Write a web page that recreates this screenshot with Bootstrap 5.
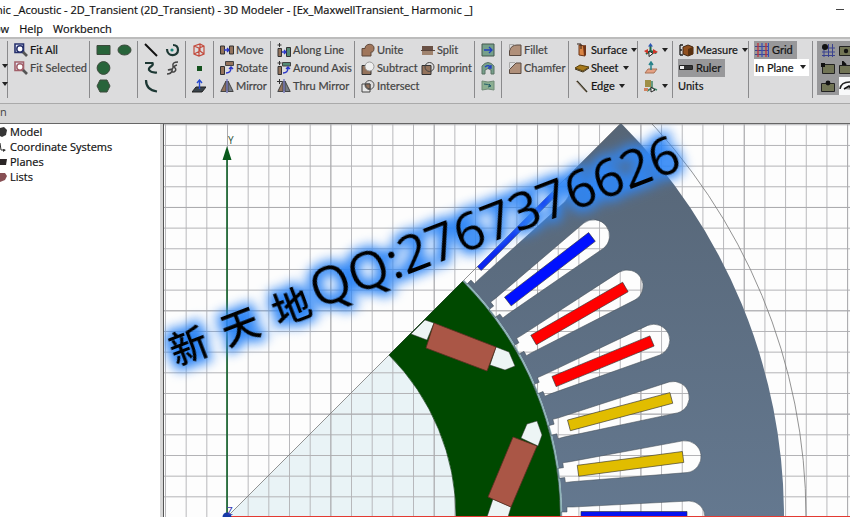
<!DOCTYPE html>
<html lang="en">
<head>
<meta charset="utf-8">
<meta name="viewport" content="width=device-width, initial-scale=1">
<title>3D Modeler</title>
<link href="https://cdn.jsdelivr.net/npm/bootstrap@5.3.0/dist/css/bootstrap.min.css" rel="stylesheet">
<style>
body{font-family:"Open Sans","Noto Sans",sans-serif;font-size:11px;line-height:18px;color:#111;background:#fff}
.app{min-height:100vh}
.titlebar{height:20px;font-size:11px;line-height:20px;margin-left:-4px;-webkit-text-stroke:.2px #111}
.menubar{height:17px;line-height:17px;gap:10px;margin-left:-6px;-webkit-text-stroke:.2px #111}
.menubar a{color:#111}
.ribbon{background:#dcdcdd;border-top:2px solid #bcbcbc;border-bottom:1px solid #aaa;height:67px;padding-top:2px}
.grp{padding:0 0 0 6px;display:flex;flex:none;height:57px;border-right:1px solid #8a8a8c}
.stack{display:flex;flex-direction:column;flex:none}
.tool{display:flex;align-items:center;gap:2px;height:18px;padding:0;border:0;background:none;color:#444;white-space:nowrap;font-family:Lato,"Open Sans",sans-serif;font-size:11px;line-height:18px;-webkit-text-stroke:.2px currentColor}
.dark .tool,.tool.ink{color:#151515}
.tool svg{flex:none}
.tri::after{content:"";border:3px solid transparent;border-top:4px solid #222;border-bottom:0;margin-left:2px}
.tool.on{background:#98989a}
.w-a{width:8px;padding:0}.w-b{width:82px}.w-c{width:48px}.w-d{width:28px}.w-e{width:57px}.w-f{width:84px}.w-g{width:120px}.w-h{width:27px}.w-i{width:67px}.w-j{width:69px}.w-k{width:35px}.w-l{width:76px;padding-left:5px}.w-m{width:64px;padding-left:5px}
.w-g .stack:first-child{width:60px}
.w-c .stack{width:21px}
.w-n{padding-left:4px;border:0}
.plane{width:55px;height:17px;border:0;background:#fff;color:#111;font-family:Lato,"Open Sans",sans-serif;font-size:11px;line-height:17px;padding:0 1px;appearance:none;-webkit-text-stroke:.2px #111}
.pick{position:relative;width:55px;height:17px}
.pick::after{content:"";position:absolute;right:3px;top:6px;border:3px solid transparent;border-top:4px solid #222;border-bottom:0;pointer-events:none}
.tabs{height:20px;background:#d6d6d6;line-height:16px;color:#444;border-bottom:1px solid #666}
.tree{width:160px;flex:none;line-height:15px;-webkit-text-stroke:.2px #111}
.tree li{display:flex;align-items:center;gap:2px;height:15px}
.split{width:4px;flex:none;background:#d6d6d6;border-right:1px solid #555}
.view{min-width:0}
.view svg{display:block;width:100%}
.mark-text{font-family:"Open Sans","Noto Sans CJK SC",sans-serif;font-size:52px;fill:#000}
.mark-cjk{font-family:"Noto Sans CJK SC",sans-serif;font-size:38px;font-weight:500}
.axis-text{font-family:"Open Sans",sans-serif;font-size:10px}
</style>
<script src="https://cdn.jsdelivr.net/npm/bootstrap@5.3.0/dist/js/bootstrap.bundle.min.js"></script>
</head>
<body>
<svg width="0" height="0" class="position-absolute" aria-hidden="true">
<defs>
<symbol id="fit" viewBox="0 0 14 14"><path d="M1 1h8.500v8.500H1z" fill="#e8eefc" stroke="currentColor" stroke-width="1.600"/><circle cx="6" cy="6" r="3.200" fill="#fff" stroke="currentColor" stroke-width="1.500"/><path d="M9 9l4 4" stroke="#555" stroke-width="2.600"/></symbol>
<symbol id="move" viewBox="0 0 14 14"><path d="M.5 3h4v8h-4z" fill="#94735c" stroke="#333"/><path d="M9.500 3h4v8h-4z" fill="#94735c" stroke="#333"/><path d="M4 7h5M7 5l2 2-2 2" fill="none" stroke="#2a36c8" stroke-width="1.300"/></symbol>
<symbol id="rot" viewBox="0 0 14 14"><path d="M5.500.5h8v4h-8z" fill="#94735c" stroke="#444"/><path d="M.5 5.500h4v8h-4z" fill="#94735c" stroke="#333"/><path d="M6 12c4 0 5-2 5-5M9 8l2-2 2 2" fill="none" stroke="#2a36c8" stroke-width="1.400"/></symbol>
<symbol id="mir" viewBox="0 0 14 14"><path d="M6 2v10.500H.8z" fill="#94735c" stroke="#444"/><path d="M8 2v10.500h5.200z" fill="#777d85" stroke="#444"/><path d="M7 0v14" stroke="#4a4fae"/></symbol>
<symbol id="along" viewBox="0 0 14 14"><path d="M1 5.500h3.500v8H1z" fill="#94735c" stroke="#333"/><path d="M9.500 4.500h4v9h-4z" fill="#558b76" stroke="#333"/><path d="M5 9h4M7 7l2 2-2 2" fill="none" stroke="#2a36c8" stroke-width="1.300"/><path d="M2.500 0v4M.5 2h4" stroke="#333"/></symbol>
<symbol id="around" viewBox="0 0 14 14"><path d="M5.500 1.500h8v3.500h-8z" fill="#558b76" stroke="#444"/><path d="M1 5.500h3.500v8H1z" fill="#94735c" stroke="#333"/><path d="M6 12c4 0 5-2 5-5M9 8l2-2 2 2" fill="none" stroke="#2a36c8" stroke-width="1.400"/><path d="M2.500 0v4M.5 2h4" stroke="#333"/></symbol>
<symbol id="unite" viewBox="0 0 14 14"><path d="M1 5.500h3C4 0 13 0 13 5s-3 4-3 4v4H1z" fill="#a0765b" stroke="#5d473a"/></symbol>
<symbol id="subtract" viewBox="0 0 14 14"><path d="M1 4.500h9v9H1z" fill="#94735c" stroke="#333"/><circle cx="8.500" cy="5.500" r="4.500" fill="#eee" stroke="#999"/></symbol>
<symbol id="intersect" viewBox="0 0 14 14"><path d="M1 5h8v8H1z" fill="#e8e8e8" stroke="#444"/><circle cx="8.500" cy="6" r="4.500" fill="none" stroke="#555"/><path d="M4.500 5H9v5A5 5 0 0 1 4.500 5" fill="#94735c" stroke="#444"/></symbol>
<symbol id="splitic" viewBox="0 0 14 14"><path d="M1 3h11v4H1z" fill="#6a5145"/><path d="M1 7h11v5H1z" fill="#a0846f"/><path d="M0 7.500h14" stroke="#5b463b"/></symbol>
<symbol id="imprint" viewBox="0 0 14 14"><path d="M1 4.500h9v9H1z" fill="#94735c" stroke="#333"/><circle cx="8.500" cy="6" r="4.500" fill="none" stroke="#444"/></symbol>
<symbol id="fillet" viewBox="0 0 14 14"><path d="M1.500 12.500V8Q3 2 9 2h4v10.500z" fill="#b0907a" stroke="#5a4a40"/><path d="M1.500 6V1.500H6" fill="none" stroke="#aaa"/></symbol>
<symbol id="chamfer" viewBox="0 0 14 14"><path d="M1.500 12.500V8.500L8 2h5v10.500z" fill="#b0907a" stroke="#5a4a40"/><path d="M1.500 7V1.500H7" fill="none" stroke="#aaa"/></symbol>
<symbol id="triad" viewBox="0 0 14 14"><path d="M6.500 8V2M6.500 8L2 11M6.500 8l6 2" fill="none" stroke="currentColor" stroke-width="2"/><path d="M4 3.500L6.500 0 9 3.500z" fill="#2c55b5"/><path d="M0 8l4-2v5z" fill="#cf3527"/><path d="M9 6l5 3-5 2z" fill="#cf3527"/><path d="M5 8l4 2.500-4 3z" fill="#fff" stroke="#222"/></symbol>
<symbol id="gridic" viewBox="0 0 14 14"><path d="M0 3.500h14M0 7.500h14M0 11.500h14" stroke="#3a468f" stroke-width="1.200"/><path d="M3 0v14M11 0v14" stroke="#c2323b" stroke-width="1.300"/><path d="M7 0v14M13.500 0v14" stroke="#384dbb" stroke-width="1.200"/></symbol>
</defs>
</svg>

<div class="app d-flex flex-column overflow-hidden">
<header class="titlebar d-flex justify-content-between text-nowrap">
<span>nic _Acoustic - 2D_Transient (2D_Transient) - 3D Modeler - [Ex_MaxwellTransient_ Harmonic _]</span>
<button class="btn p-0 border-0 me-1 d-flex align-items-center" aria-label="Minimize"><svg width="10" height="10"><path d="M0 4.500h8" stroke="#444"/></svg></button>
</header>
<nav class="menubar d-flex"><a href="#" class="text-decoration-none">ow</a><a href="#" class="text-decoration-none">Help</a><a href="#" class="text-decoration-none">Workbench</a></nav>

<div class="ribbon d-flex overflow-hidden">
<div class="grp w-a"><div class="stack pt-3"><button class="tool tri" aria-label="More"></button><button class="tool tri" aria-label="More options"></button></div></div>
<div class="grp w-b"><div class="stack">
<button class="tool ink"><svg width="14" height="14" color="#26306c"><use href="#fit"/></svg>Fit All</button>
<button class="tool"><svg width="14" height="14" color="#a2606a"><use href="#fit"/></svg>Fit Selected</button></div></div>
<div class="grp w-c"><div class="stack">
<button class="tool" aria-label="Rectangle"><svg width="15" height="14"><path d="M1 2.500h13v9H1z" fill="#28643a" stroke="#3d4a3d"/></svg></button>
<button class="tool" aria-label="Circle"><svg width="15" height="14"><circle cx="7.500" cy="7" r="6.400" fill="#28643a" stroke="#3d4a3d"/></svg></button>
<button class="tool" aria-label="Polygon"><svg width="15" height="14"><path d="M4 1h7l3 6-3 6H4L1 7z" fill="#28643a" stroke="#3d4a3d"/></svg></button></div>
<div class="stack"><button class="tool" aria-label="Ellipse"><svg width="15" height="14"><ellipse cx="7.500" cy="7" rx="6.500" ry="5" fill="#28643a" stroke="#3d4a3d"/></svg></button></div></div>
<div class="grp w-c"><div class="stack">
<button class="tool" aria-label="Line"><svg width="15" height="14"><path d="M1 1l12 12" stroke="#111" stroke-width="2"/></svg></button>
<button class="tool" aria-label="Spline"><svg width="15" height="14"><path d="M1 2h7.500q1 2-1.500 3.500T5 9q2 3 8 2.500" fill="none" stroke="#1d3834" stroke-width="2.200"/></svg></button>
<button class="tool" aria-label="Arc"><svg width="15" height="14"><path d="M2 1q0 10 11 11.500" fill="none" stroke="#1d3834" stroke-width="2.200"/></svg></button></div>
<div class="stack">
<button class="tool" aria-label="Center arc"><svg width="15" height="14"><path d="M2 6c0 8 11 8 11 1 0-3-2-5-5-5" fill="none" stroke="#1d3834" stroke-width="2.200"/><circle cx="7" cy="7" r="1.600" fill="#168578"/></svg></button>
<button class="tool" aria-label="Equation curve"><svg width="15" height="14"><path d="M13 1Q7 1 8 5t-5 4q5-2 4 1t-5 3M12 4q-4 1-2 3t-1 4H6" fill="none" stroke="#444" stroke-width="1.500"/></svg></button></div></div>
<div class="grp w-d"><div class="stack">
<button class="tool" aria-label="Box"><svg width="14" height="14"><path d="M2 3l6-2 4 2v8l-5 2-5-2zM2 3l5 2 5-2M7 5v8M8 1v7l-6 3M8 8l4 3" fill="none" stroke="#c34a3c" stroke-width="1.200"/></svg></button>
<button class="tool" aria-label="Point"><svg width="14" height="14"><path d="M5 5h5v5H5z" fill="#14521e"/></svg></button>
<button class="tool" aria-label="Plane"><svg width="14" height="14"><path d="M0 13l4-5h10l-4 5z" fill="#39434a" stroke="#222"/><path d="M7.500 10V1M5 4l2.500-3L10 4" fill="none" stroke="#2749cf" stroke-width="1.400"/></svg></button></div></div>
<div class="grp w-e"><div class="stack">
<button class="tool"><svg width="14" height="14"><use href="#move"/></svg>Move</button>
<button class="tool"><svg width="14" height="14"><use href="#rot"/></svg>Rotate</button>
<button class="tool"><svg width="14" height="14"><use href="#mir"/></svg>Mirror</button></div></div>
<div class="grp w-f"><div class="stack">
<button class="tool"><svg width="14" height="14"><use href="#along"/></svg>Along Line</button>
<button class="tool"><svg width="14" height="14"><use href="#around"/></svg>Around Axis</button>
<button class="tool"><svg width="14" height="14"><use href="#mir"/><path d="M2.500 0v5M0 2.500h5" stroke="#333"/></svg>Thru Mirror</button></div></div>
<div class="grp w-g"><div class="stack">
<button class="tool"><svg width="14" height="14"><use href="#unite"/></svg>Unite</button>
<button class="tool"><svg width="14" height="14"><use href="#subtract"/></svg>Subtract</button>
<button class="tool"><svg width="14" height="14"><use href="#intersect"/></svg>Intersect</button></div>
<div class="stack">
<button class="tool"><svg width="14" height="14"><use href="#splitic"/></svg>Split</button>
<button class="tool"><svg width="14" height="14"><use href="#imprint"/></svg>Imprint</button></div></div>
<div class="grp w-h"><div class="stack">
<button class="tool" aria-label="Sweep along vector"><svg width="14" height="14"><path d="M1 1h12v12H1z" fill="#76a08b" stroke="#44584e"/><path d="M3 7h8M8 4l3 3-3 3" fill="none" stroke="#203fc0" stroke-width="1.300"/></svg></button>
<button class="tool" aria-label="Sweep around axis"><svg width="14" height="14"><path d="M1 13V5q6-7 12 0v8h-3V9q-3-3-6 0v4z" fill="#76a08b" stroke="#5b7365"/><path d="M4 6q4-3 6 1M10 4v3H7" fill="none" stroke="#203fc0" stroke-width="1.300"/></svg></button>
<button class="tool" aria-label="Sweep along path"><svg width="14" height="14"><path d="M1 2q6 2 12 0v9q-6-2-12 0z" fill="#8caf91" stroke="#718b77"/><path d="M3 5q4 0 7 2M8 5l2 2-3 1" fill="none" stroke="#235d68"/></svg></button></div></div>
<div class="grp w-i"><div class="stack">
<button class="tool"><svg width="14" height="14"><use href="#fillet"/></svg>Fillet</button>
<button class="tool"><svg width="14" height="14"><use href="#chamfer"/></svg>Chamfer</button></div></div>
<div class="grp w-j dark"><div class="stack">
<button class="tool tri"><svg width="14" height="14"><path d="M4 2l6 1v10l-6-1z" fill="#d98545" stroke="#6b3517"/><path d="M8 3l3-1v10l-2 1z" fill="#713416"/><path d="M2 1h4v5" fill="none" stroke="#302018"/></svg>Surface</button>
<button class="tool tri"><svg width="14" height="14"><path d="M0 7l5-3 9 2-6 4z" fill="#a77a1c" stroke="#5b420c"/><path d="M0 8l8 3 6-4" fill="none" stroke="#3c2d10"/></svg>Sheet</button>
<button class="tool tri"><svg width="14" height="14"><path d="M2 2l10 11" stroke="#332" stroke-width="1.500"/><path d="M1 2l10 11" stroke="#a08b7c"/></svg>Edge</button></div></div>
<div class="grp w-k"><div class="stack">
<button class="tool tri" aria-label="Coordinate system"><svg width="14" height="14" color="#1d6848"><use href="#triad"/></svg></button>
<button class="tool" aria-label="Face coordinate system"><svg width="14" height="14"><path d="M1 12l3-4h9l-3 4z" fill="#e4a184" stroke="#a97356"/><path d="M7 9V1M5 4l2-3 2 3" fill="none" stroke="#27828a" stroke-width="1.500"/></svg></button>
<button class="tool tri" aria-label="Object coordinate system"><svg width="14" height="14"><path d="M1 1h6v7H1z" fill="#9e8f45"/><path d="M8 2v7l5 2M8 9l-5 3" fill="none" stroke="#3b8263" stroke-width="1.500"/><path d="M0 9h4v3H0z" fill="#d0815f"/><path d="M7 8l4 3-4 2z" fill="#fff" stroke="#222"/></svg></button></div></div>
<div class="grp w-l dark"><div class="stack align-items-start">
<button class="tool tri"><svg width="16" height="14"><path d="M2 2v10M2 2h3M2 7h2M2 12h3" fill="none" stroke="#222" stroke-width="1.300"/><path d="M5 4l5-2 5 2v7l-5 2-5-2z" fill="#91501f" stroke="#422713"/><path d="M10 6v7l5-2V4z" fill="#59300f"/></svg>Measure</button>
<button class="tool on pe-1"><svg width="16" height="14"><path d="M1.500 4.500h13v4h-13z" fill="#eee" stroke="#222"/><path d="M6 5h8v3H6z" fill="#333"/></svg>Ruler</button>
<button class="tool">Units</button></div></div>
<div class="grp w-m dark"><div class="stack align-items-start">
<button class="tool on pe-1"><svg width="16" height="14" viewBox="-1 0 16 14"><use href="#gridic" width="14" height="14"/></svg>Grid</button>
<div class="pick"><select class="plane" aria-label="Grid plane"><option>In Plane</option></select></div></div></div>
<div class="grp w-n"><div class="stack">
<button class="tool on px-1" aria-label="Snap to grid"><svg width="14" height="14"><path d="M3 3v11M7.500 1v13M11.500 1v13M1 5h13M1 9h13M1 12.500h13" stroke="#3a428f"/><circle cx="4" cy="4" r="3" fill="#111"/></svg></button>
<button class="tool on px-1" aria-label="Snap to vertex"><svg width="14" height="14"><path d="M1.500 3.500h12v9h-12z" fill="#717455" stroke="#222"/><path d="M0 2h4v4H0z" fill="#111"/></svg></button>
<button class="tool on px-1" aria-label="Snap to edge"><svg width="14" height="14"><path d="M.5 4.500h13v8H.5z" fill="#717455" stroke="#222"/><circle cx="7" cy="4" r="2.400" fill="#111"/></svg></button></div>
<div class="stack">
<button class="tool on" aria-label="Snap to face"><svg width="14" height="14"><path d="M.5 3.500h13v9H.5z" fill="#717455" stroke="#222"/><circle cx="7" cy="8" r="2.200" fill="#111"/></svg></button>
<button class="tool on" aria-label="Snap to quadrant"><svg width="14" height="14"><path d="M.5 4.500h13v8H.5z" fill="#717455" stroke="#222"/><path d="M4 4V1l3 3" stroke="#111" stroke-width="2"/></svg></button>
<button class="tool bg-light" aria-label="Snap to arc center"><svg width="14" height="14"><path d="M1 10q1-8 12-7" fill="none" stroke="#222" stroke-width="1.500"/><path d="M5 10l5-3 3 4" fill="#999" stroke="#111" stroke-width="1.500"/></svg></button></div></div>
</div>
<div class="tabs">n</div>

<main class="d-flex flex-grow-1">
<ul class="tree list-unstyled mb-0">
<li><svg width="8" height="14"><path d="M0 3l4-1 3 3-1 5-4 2-2-1z" fill="#363636"/></svg>Model</li>
<li><svg width="8" height="14"><path d="M0 3l1 7h4" fill="none" stroke="#333"/><path d="M3 9l3 1-3 2" fill="#333"/></svg>Coordinate Systems</li>
<li><svg width="8" height="14"><path d="M0 4h7l-1 6H0z" fill="#2a2526"/></svg>Planes</li>
<li><svg width="8" height="14"><path d="M0 3h5l2 3-2 4-5 2z" fill="#874f54"/></svg>Lists</li>
</ul>
<div class="split"></div>
<section class="view flex-grow-1" aria-label="Motor cross section">
<svg viewBox="164 124 686 393" preserveAspectRatio="xMinYMin slice">
<defs>
<pattern id="fine" x="227" y="517" width="20.670" height="20.670" patternUnits="userSpaceOnUse"><path d="M0 0H20.670M0 0V20.670" stroke="#b2b2b5" stroke-width="1.800" fill="none"/></pattern>
<pattern id="major" x="227" y="517" width="103.350" height="103.350" patternUnits="userSpaceOnUse"><path d="M0 0H103.350M0 0V103.350" stroke="#a8a8ab" stroke-width="1.600" fill="none"/></pattern>
<path id="slot" d="M334-5H340V-10H346L462-16A16 16 0 0 1 462 16L346 10H340V5H334z"/>
<path id="bar" d="M354-5.500H460V5.500H354z"/>
<clipPath id="wedge"><path d="M227 517L627 117H850V517z"/></clipPath>
<mask id="slots" maskUnits="userSpaceOnUse" x="160" y="110" width="700" height="420"><path d="M160 110h700v420H160z" fill="#fff"/><g transform="translate(227 517)" fill="#000"><use href="#slot"/><use href="#slot" transform="rotate(-7.500)"/><use href="#slot" transform="rotate(-15)"/><use href="#slot" transform="rotate(-22.500)"/><use href="#slot" transform="rotate(-30)"/><use href="#slot" transform="rotate(-37.500)"/><use href="#slot" transform="rotate(-45)"/></g></mask>
<linearGradient id="steel" x1="0" y1="0" x2="0" y2="1"><stop stop-color="#566576"/><stop offset="1" stop-color="#64788f"/></linearGradient>
<filter id="glow" filterUnits="userSpaceOnUse" x="-200" y="-120" width="640" height="240" color-interpolation-filters="sRGB"><feMorphology in="SourceAlpha" operator="dilate" radius="4" result="d"/><feGaussianBlur in="d" stdDeviation="6" result="b"/><feFlood flood-color="#2f86f5"/><feComposite in2="b" operator="in" result="g"/><feMerge><feMergeNode in="g"/><feMergeNode in="SourceGraphic"/></feMerge></filter>
</defs>
<path d="M164 124H850V517H164z" fill="#fdfdfd"/>
<path d="M227 517L389 355A229 229 0 0 1 456 517z" fill="#e9f3f6"/>
<path d="M164 124H850V517H164z" fill="url(#fine)"/>
<path d="M164 124H850V517H164z" fill="url(#major)"/>
<path d="M227 517L636.400 107.600A579 579 0 0 1 806 517" fill="none" stroke="#777" stroke-width=".8"/>
<g clip-path="url(#wedge)">
<path mask="url(#slots)" d="M463.900 280.100L620.900 123.100A557 557 0 0 1 784 517H562A335 335 0 0 0 463.900 280.100z" fill="url(#steel)"/>
<path d="M463.200 280.800A334 334 0 0 1 561 517" fill="none" stroke="#8fb3b9" stroke-width="2.500"/>
<g transform="translate(227 517)"><g fill="none" stroke="#424c55" stroke-width=".5"><use href="#slot"/><use href="#slot" transform="rotate(-7.500)"/><use href="#slot" transform="rotate(-15)"/><use href="#slot" transform="rotate(-22.500)"/><use href="#slot" transform="rotate(-30)"/><use href="#slot" transform="rotate(-37.500)"/><use href="#slot" transform="rotate(-45)"/></g>
<g stroke="#333" stroke-width=".6"><use href="#bar" fill="#0713ef"/><use href="#bar" transform="rotate(-7.500)" fill="#e1bd00"/><use href="#bar" transform="rotate(-15)" fill="#e1bd00"/><use href="#bar" transform="rotate(-22.500)" fill="#f00"/><use href="#bar" transform="rotate(-30)" fill="#f00"/><use href="#bar" transform="rotate(-37.500)" fill="#0010ff"/><use href="#bar" transform="rotate(-45)" fill="#0b25f0"/></g></g>
</g>
<path d="M389 355L462.500 281.500A333 333 0 0 1 560 517H456A229 229 0 0 0 389 355z" fill="#004900" stroke="#113c16" stroke-width=".7"/>
<g fill="#edf5f5" stroke="#333" stroke-width=".5"><path d="M425 320L434 323 427 340 411 334z"/><path d="M496 347L509 352 515 366 505 370 490 365z"/><path d="M521 438L527 424 537 421 542 435 538 446z"/><path d="M493 499L511 507 508 517H487z"/></g>
<g fill="#aa5646" stroke="#5d2d22" stroke-width=".8"><path d="M434 323L496 347 487 371 426 348z"/><path d="M513 437L537 446 511 507 488 497z"/></g>
<path d="M227 517V155" stroke="#0d5d25" stroke-width="1.600"/><path d="M227 146L222.500 160h9z" fill="#08591b"/>
<text class="axis-text" x="228" y="144" fill="#264e31">Y</text>
<path d="M227 516.500H850" stroke="#e33a32"/><circle cx="227" cy="517" r="4.500" fill="#163aa7"/><text class="axis-text" x="227" y="515" fill="#3a35b1">Z</text>
<g transform="translate(318 309) rotate(-21)"><g filter="url(#glow)" class="mark-text"><text x="0" y="0">QQ:2767376626</text><text class="mark-cjk" x="-153 -98 -43" y="2">新天地</text></g></g>
</svg>
</section>
</main>
</div>
</body>
</html>
